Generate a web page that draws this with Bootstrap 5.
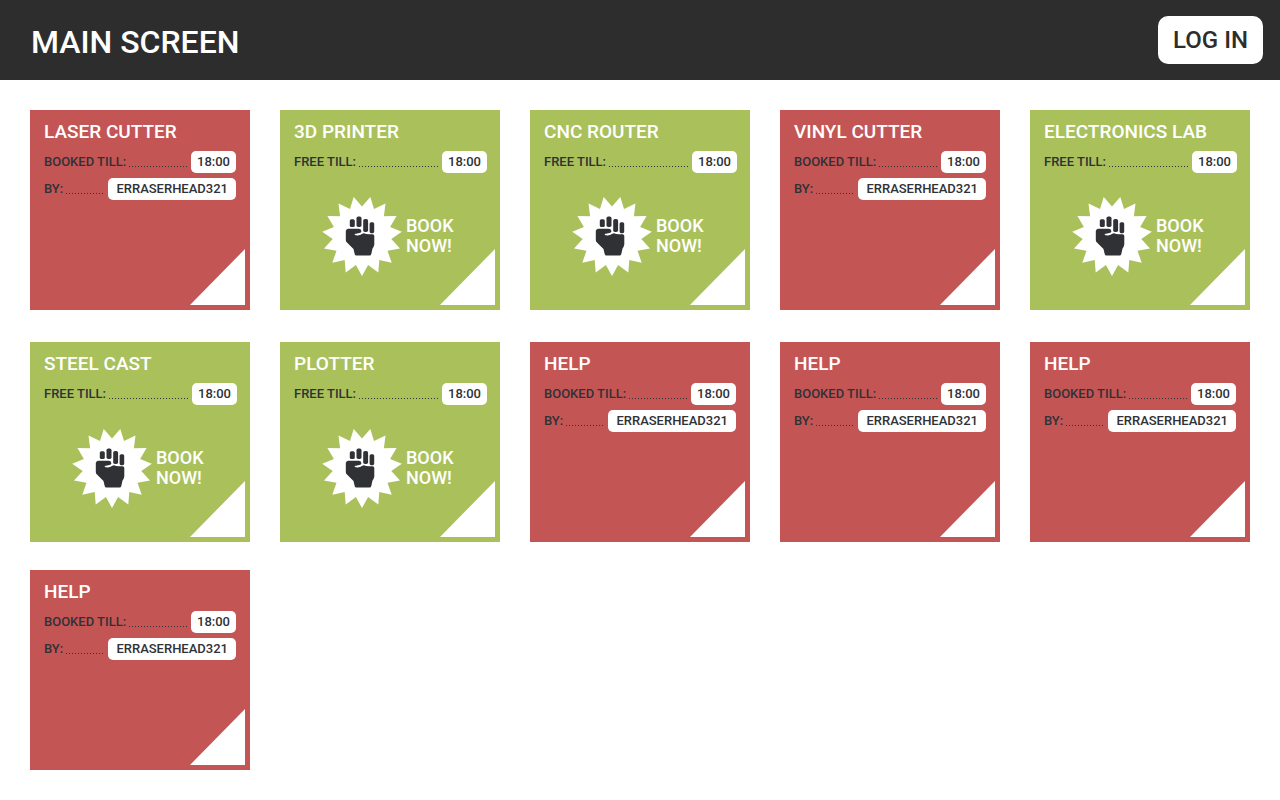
<!DOCTYPE html>
<html lang="en">
<head>
<meta charset="utf-8">
<meta name="viewport" content="width=device-width, initial-scale=1">
<title>Main screen</title>
<link rel="stylesheet" href="https://cdn.jsdelivr.net/npm/bootstrap@5.3.0/dist/css/bootstrap.min.css">
<style>
  body { font-family: Roboto, "Liberation Sans", sans-serif; font-weight: 500; color: #303135; background: #fff; }
  .topbar { height: 80px; padding: 0 17px 0 31px; background: #2d2d2d; }
  .topbar h1 { font-size: 32px; line-height: 40px; font-weight: 500; padding-top: 4px; }
  .login { height: 48px; padding: 0 15px; border-radius: 10px; font-size: 24px; line-height: 48px; font-weight: 500; color: #2d2d2d; background: #fff; }
  .login:hover { background: #eee; }
  .board { display: grid; grid-template-columns: repeat(auto-fill, minmax(220px, 1fr)); grid-template-rows: 232px 228px; grid-auto-rows: 230px; column-gap: 30px; padding: 30px; align-items: start; }
  .tile { min-height: 200px; padding: 12px 14px; }
  .tile h2 { font-size: 19px; line-height: 20px; font-weight: 500; margin-bottom: 8px; }
  .busy { background: #c45555; }
  .free { background: #aac15b; padding-right: 13px; }
  .fact { font-size: 13px; line-height: 22px; margin-bottom: 5px; padding-top: 1px; }
  .fact + .fact { padding-top: 0; }
  .leader { height: 1px; margin: 9px 3px 0 3px; background: repeating-linear-gradient(90deg, #303135 0 1px, transparent 1px 3px); }
  .pill { padding: 0 6px; border-radius: 5px; background: #fff; }
  .pill-name { padding: 0 8px; }
  .book { margin: 23px 0 0 28px; padding: 0; gap: 4px; font-size: 18px; line-height: 20px; font-weight: 500; text-align: left; color: #fff; }
  .book:hover { color: #fff; }
  .burst { width: 80px; height: 80px; }
  .fold { right: 5px; bottom: 5px; width: 55px; height: 56px; background: #fff; clip-path: polygon(100% 0, 100% 100%, 0 100%); }
</style>
</head>
<body>
<svg class="d-none" aria-hidden="true">
  <symbol id="fist" viewBox="-40 -40 80 80">
    <polygon fill="#fff" points="0,40 6.1,28.9 16.3,36.5 17.3,23.9 29.7,26.8 25.5,14.8 38,12.4 29.3,3.1 39.8,-4.2 28.1,-9.1 34.6,-20 21.9,-19.7 23.5,-32.4 12,-26.9 8.3,-39.1 0,-29.5 -8.3,-39.1 -12,-26.9 -23.5,-32.4 -21.9,-19.7 -34.6,-20 -28.1,-9.1 -39.8,-4.2 -29.3,3.1 -38,12.4 -25.5,14.8 -29.7,26.8 -17.3,23.9 -16.3,36.5 -6.1,28.9"/>
    <g fill="#303135">
      <rect x="-12.2" y="-16.8" width="5" height="7.8" rx="1.6"/>
      <rect x="-5.5" y="-19.5" width="5" height="10.5" rx="1.8"/>
      <rect x="1.2" y="-17" width="4.9" height="13" rx="1.8"/>
      <rect x="7.6" y="-13.8" width="4.6" height="11" rx="1.6"/>
      <path d="M-14 -7.2 H-3 Q-0.6 -7 -0.6 -4.8 Q-0.8 -3.4 -2.6 -2.9 L-7.2 -1.9 V-0.9 Q-4 -0.2 -1.4 -1.2 Q0.4 -2.8 2 -2.8 Q4 -1.7 7 -1.7 H10.500 Q12.300 -1.5 12.300 0 V8.500 Q12 10.500 10.500 12.500 L9.300 18 Q9 19.500 7.500 19.500 H-5.500 Q-7 19.500 -7.300 18 L-8.500 13 L-15 6.500 Q-16.200 5.500 -16.200 4 V-5 Q-15.800 -7 -14 -7.2 Z"/>
    </g>
  </symbol>
</svg>

<header class="topbar d-flex align-items-center justify-content-between">
  <h1 class="text-white mb-0">MAIN SCREEN</h1>
  <button type="button" class="login btn border-0">LOG IN</button>
</header>

<main class="board" id="board"></main>

<script src="https://cdn.jsdelivr.net/npm/bootstrap@5.3.0/dist/js/bootstrap.bundle.min.js"></script>
<script>
  const machines = [
    { name: 'LASER CUTTER', till: '18:00', by: 'ERRASERHEAD321' },
    { name: '3D PRINTER', till: '18:00' },
    { name: 'CNC ROUTER', till: '18:00' },
    { name: 'VINYL CUTTER', till: '18:00', by: 'ERRASERHEAD321' },
    { name: 'ELECTRONICS LAB', till: '18:00' },
    { name: 'STEEL CAST', till: '18:00' },
    { name: 'PLOTTER', till: '18:00' },
    { name: 'HELP', till: '18:00', by: 'ERRASERHEAD321' },
    { name: 'HELP', till: '18:00', by: 'ERRASERHEAD321' },
    { name: 'HELP', till: '18:00', by: 'ERRASERHEAD321' },
    { name: 'HELP', till: '18:00', by: 'ERRASERHEAD321' }
  ];
  const fact = (label, value, extra = '') => `
    <div class="fact d-flex align-items-center">
      <span>${label}:</span><span class="leader flex-grow-1"></span><span class="pill ${extra}">${value}</span>
    </div>`;
  document.getElementById('board').innerHTML = machines.map(m => `
    <section class="tile position-relative ${m.by ? 'busy' : 'free'}">
      <h2 class="text-white">${m.name}</h2>
      ${fact(m.by ? 'BOOKED TILL' : 'FREE TILL', m.till)}
      ${m.by ? fact('BY', m.by, 'pill-name') : `
      <button type="button" class="book btn border-0 d-flex align-items-center">
        <svg class="burst" aria-hidden="true"><use href="#fist"/></svg>
        <span>BOOK<br>NOW!</span>
      </button>`}
      <span class="fold position-absolute"></span>
    </section>`).join('');
</script>
</body>
</html>
